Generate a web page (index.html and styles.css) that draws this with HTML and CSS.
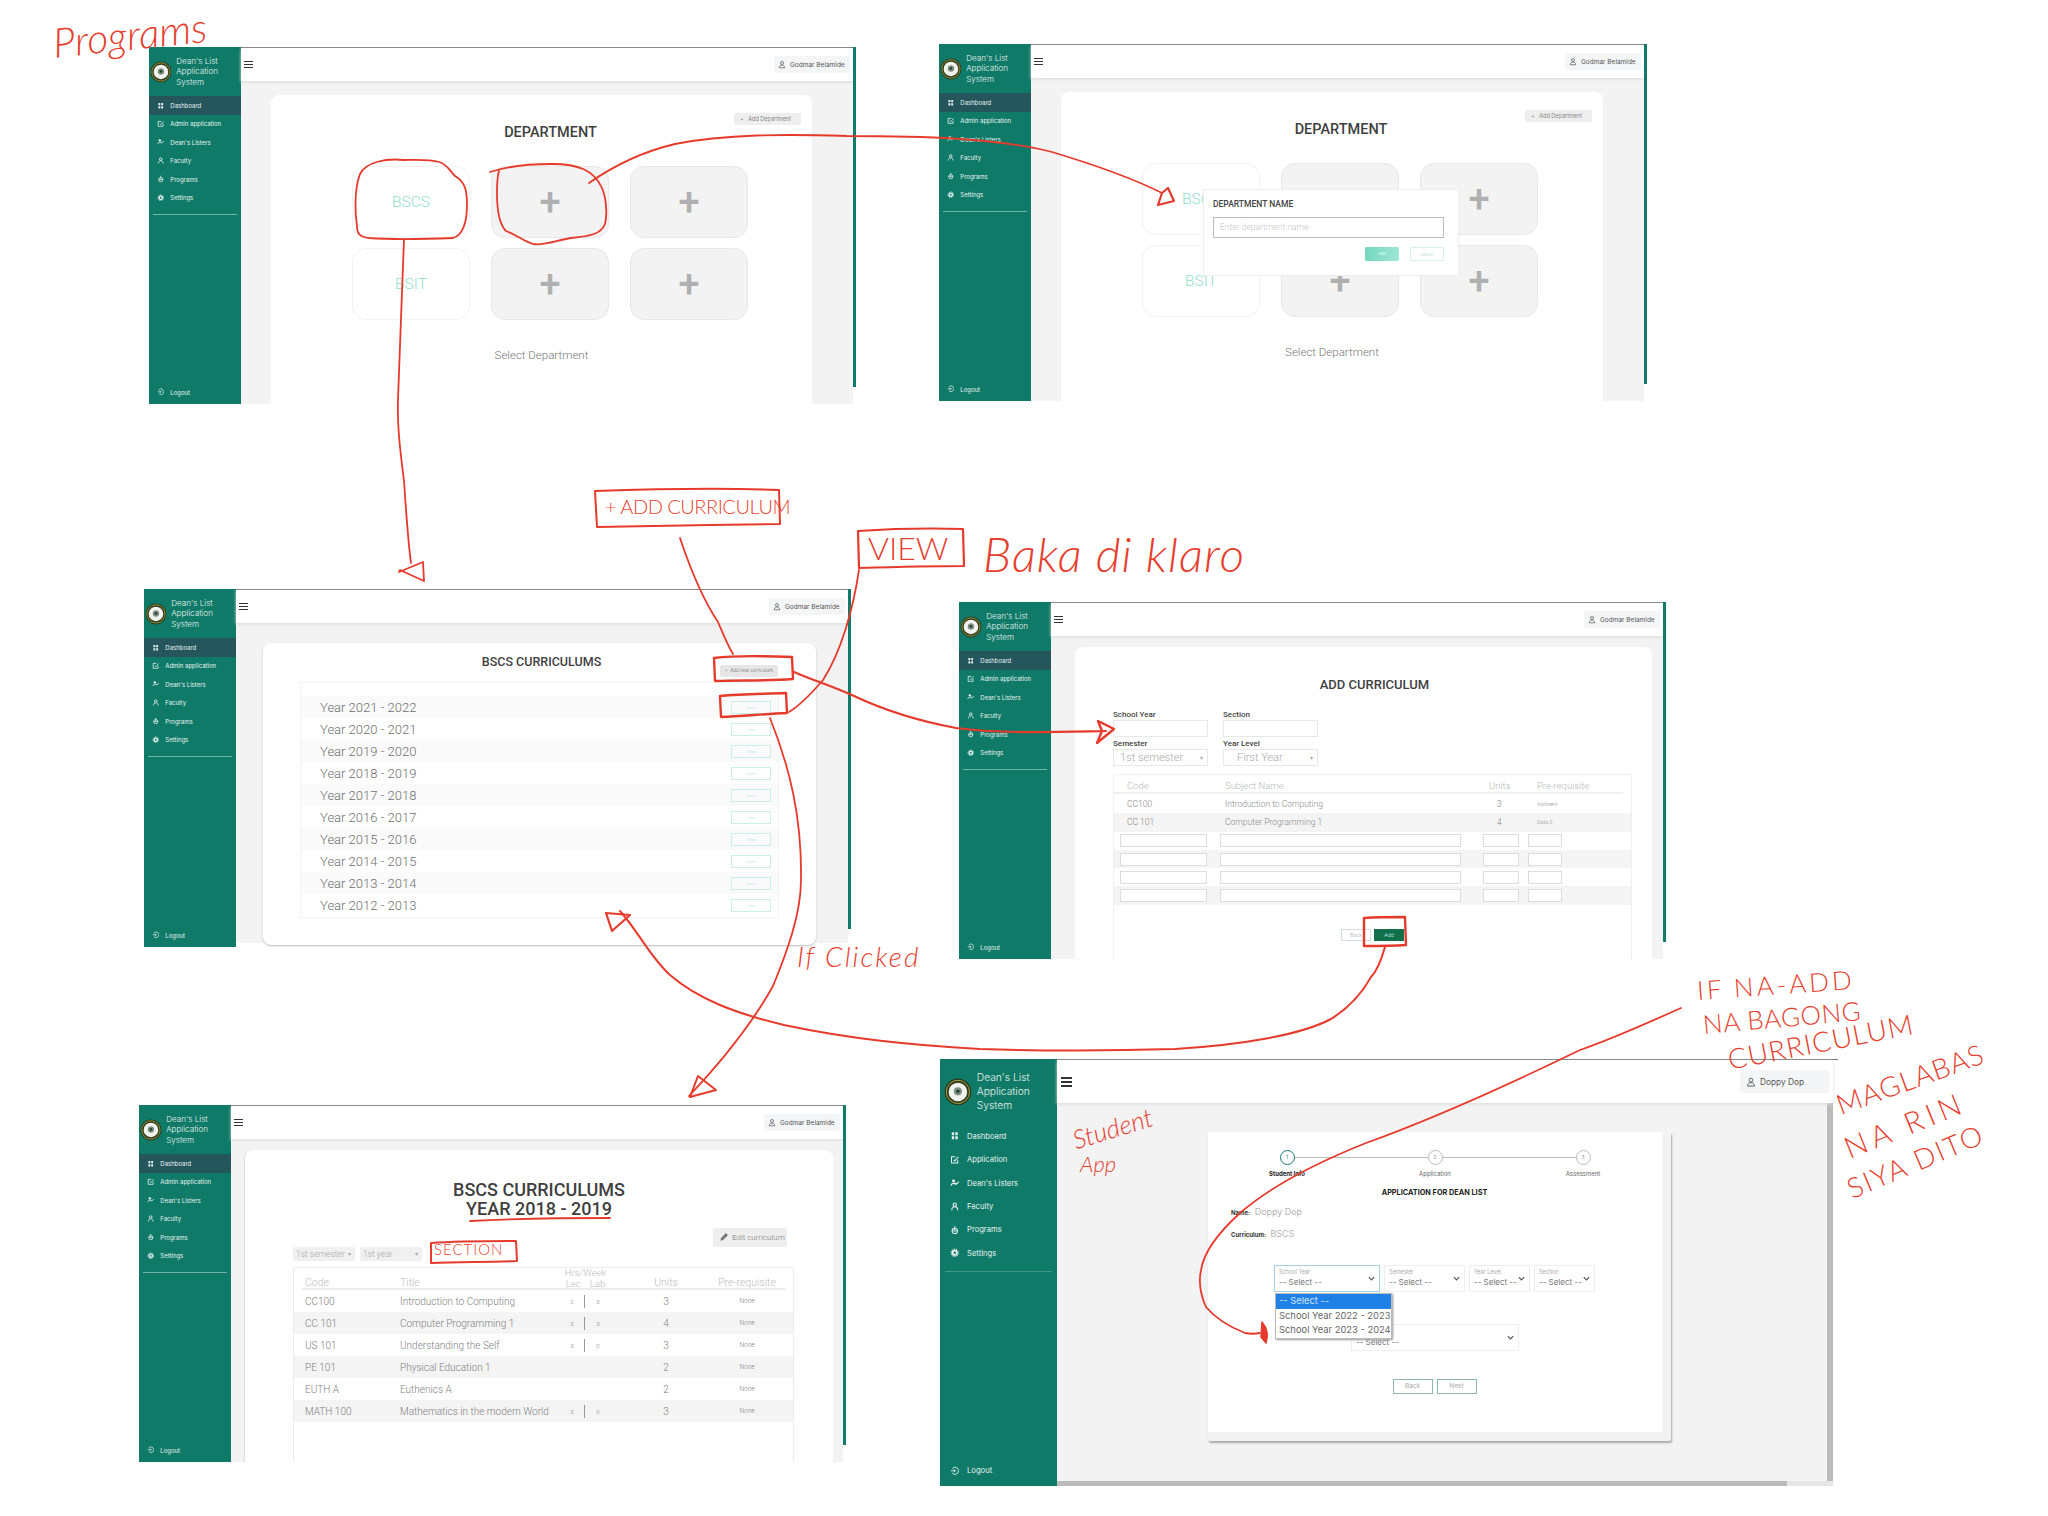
FILE: index.html
```html
<!DOCTYPE html>
<html>
<head>
<meta charset="utf-8">
<title>Dean's List Application System - flow notes</title>
<link rel="stylesheet" href="styles.css">
</head>
<body>

<!-- shared icons -->
<svg class="defs" width="0" height="0">
	<symbol id="i-dash" viewBox="0 0 16 16"><path d="M3 2h4v5H3zM9 2h4v5H9zM3 9h4v5H3zM9 9h4v5H9z" fill="currentColor"/></symbol>
	<symbol id="i-app" viewBox="0 0 16 16"><path d="M13 8v5.500H2.500V3H9M6 8l2 2 6-7" fill="none" stroke="currentColor" stroke-width="1.700"/></symbol>
	<symbol id="i-list" viewBox="0 0 16 16"><circle cx="6" cy="5" r="2.500" fill="currentColor"/><path d="M2 13c0-3 2-4 4-4s3 1 4 2M9 8l2 2 4-4" fill="none" stroke="currentColor" stroke-width="1.800"/></symbol>
	<symbol id="i-fac" viewBox="0 0 16 16"><circle cx="8" cy="4.500" r="2.800" fill="none" stroke="currentColor" stroke-width="1.800"/><path d="M3 14c0-4 2-6 5-6s5 2 5 6" fill="none" stroke="currentColor" stroke-width="1.800"/></symbol>
	<symbol id="i-prog" viewBox="0 0 16 16"><circle cx="8" cy="10" r="4.500" fill="none" stroke="currentColor" stroke-width="1.700"/><path d="M8 1.500V10M3.500 10h9" fill="none" stroke="currentColor" stroke-width="1.500"/></symbol>
	<symbol id="i-set" viewBox="0 0 16 16"><circle cx="8" cy="8" r="3.500" fill="none" stroke="currentColor" stroke-width="3"/><circle cx="8" cy="8" r="6" fill="none" stroke="currentColor" stroke-width="2" stroke-dasharray="2 1.700"/></symbol>
	<symbol id="i-out" viewBox="0 0 16 16"><path d="M4 4a6 6 0 1 1 0 8M1.500 8H9M6.500 5.500 9 8l-2.500 2.500" fill="none" stroke="currentColor" stroke-width="1.500"/></symbol>
	<symbol id="i-user" viewBox="0 0 16 16"><circle cx="8" cy="5" r="3" fill="none" stroke="currentColor" stroke-width="1.400"/><path d="M2.500 14.500c.5-4 2.500-5.500 5.500-5.500s5 1.500 5.500 5.500z" fill="none" stroke="currentColor" stroke-width="1.400"/></symbol>
	<symbol id="i-logo" viewBox="0 0 24 24"><circle cx="12" cy="12" r="11.500" fill="#2c3b1c"/><circle cx="12" cy="12" r="10" fill="none" stroke="#b9a94a" stroke-width=".8"/><circle cx="12" cy="12" r="8" fill="#f2f3ee"/><circle cx="12" cy="11.500" r="3.500" fill="#7f8f86"/><circle cx="12" cy="11.500" r="1.500" fill="#26452f"/></symbol>
	<symbol id="i-chev" viewBox="0 0 10 10"><path d="M2 3.500 5 6.500 8 3.500" fill="none" stroke="#555" stroke-width="1.300"/></symbol>
</svg>

<!-- departments -->
<section class="win" id="win1">
	<aside class="side">
		<div class="brand"><svg class="logo"><use href="#i-logo"/></svg><p>Dean's List<br>Application<br>System</p></div>
		<a class="item active"><svg><use href="#i-dash"/></svg>Dashboard</a>
		<a class="item"><svg><use href="#i-app"/></svg>Admin application</a>
		<a class="item"><svg><use href="#i-list"/></svg>Dean's Listers</a>
		<a class="item"><svg><use href="#i-fac"/></svg>Faculty</a>
		<a class="item"><svg><use href="#i-prog"/></svg>Programs</a>
		<a class="item"><svg><use href="#i-set"/></svg>Settings</a>
		<hr>
		<a class="item logout"><svg><use href="#i-out"/></svg>Logout</a>
	</aside>
	<div class="main">
		<header class="top"><span class="burger"><i></i><i></i><i></i></span><div class="user"><svg><use href="#i-user"/></svg>Godmar Belamide</div></header>
		<div class="body">
			<div class="card dept">
				<div class="tool-row"><a class="tool">+&nbsp;&nbsp;&nbsp;Add Department</a></div>
				<h1>DEPARTMENT</h1>
				<div class="tiles">
					<div class="tile on">BSCS</div>
					<div class="tile">+</div>
					<div class="tile">+</div>
					<div class="tile on">BSIT</div>
					<div class="tile">+</div>
					<div class="tile">+</div>
				</div>
				<p class="hint">Select Department</p>
			</div>
		</div>
	</div>
</section>

<section class="win" id="win2">
	<aside class="side">
		<div class="brand"><svg class="logo"><use href="#i-logo"/></svg><p>Dean's List<br>Application<br>System</p></div>
		<a class="item active"><svg><use href="#i-dash"/></svg>Dashboard</a>
		<a class="item"><svg><use href="#i-app"/></svg>Admin application</a>
		<a class="item"><svg><use href="#i-list"/></svg>Dean's Listers</a>
		<a class="item"><svg><use href="#i-fac"/></svg>Faculty</a>
		<a class="item"><svg><use href="#i-prog"/></svg>Programs</a>
		<a class="item"><svg><use href="#i-set"/></svg>Settings</a>
		<hr>
		<a class="item logout"><svg><use href="#i-out"/></svg>Logout</a>
	</aside>
	<div class="main">
		<header class="top"><span class="burger"><i></i><i></i><i></i></span><div class="user"><svg><use href="#i-user"/></svg>Godmar Belamide</div></header>
		<div class="body">
			<div class="card dept">
				<div class="tool-row"><a class="tool">+&nbsp;&nbsp;&nbsp;Add Department</a></div>
				<h1>DEPARTMENT</h1>
				<div class="tiles">
					<div class="tile on">BSCS</div>
					<div class="tile">+</div>
					<div class="tile">+</div>
					<div class="tile on">BSIT</div>
					<div class="tile">+</div>
					<div class="tile">+</div>
				</div>
				<p class="hint">Select Department</p>
			</div>
		</div>
	</div>
	<div class="modal">
		<h2>DEPARTMENT NAME</h2>
		<div class="modal-input">Enter department name</div>
		<div class="modal-btns"><a class="btn-add">Add</a><a class="btn-cancel">Cancel</a></div>
	</div>
</section>

<!-- curriculum list -->
<section class="win" id="win3">
	<aside class="side">
		<div class="brand"><svg class="logo"><use href="#i-logo"/></svg><p>Dean's List<br>Application<br>System</p></div>
		<a class="item active"><svg><use href="#i-dash"/></svg>Dashboard</a>
		<a class="item"><svg><use href="#i-app"/></svg>Admin application</a>
		<a class="item"><svg><use href="#i-list"/></svg>Dean's Listers</a>
		<a class="item"><svg><use href="#i-fac"/></svg>Faculty</a>
		<a class="item"><svg><use href="#i-prog"/></svg>Programs</a>
		<a class="item"><svg><use href="#i-set"/></svg>Settings</a>
		<hr>
		<a class="item logout"><svg><use href="#i-out"/></svg>Logout</a>
	</aside>
	<div class="main">
		<header class="top"><span class="burger"><i></i><i></i><i></i></span><div class="user"><svg><use href="#i-user"/></svg>Godmar Belamide</div></header>
		<div class="body">
			<div class="card years-card">
				<div class="years-head">
					<span></span>
					<h1>BSCS CURRICULUMS</h1>
					<span class="years-tool"><a class="tool small">+&nbsp;&nbsp;Add new curriculum</a></span>
				</div>
				<div class="years">
					<div class="year"><span>Year 2021 - 2022</span><a>View</a></div>
					<div class="year"><span>Year 2020 - 2021</span><a>View</a></div>
					<div class="year"><span>Year 2019 - 2020</span><a>View</a></div>
					<div class="year"><span>Year 2018 - 2019</span><a>View</a></div>
					<div class="year"><span>Year 2017 - 2018</span><a>View</a></div>
					<div class="year"><span>Year 2016 - 2017</span><a>View</a></div>
					<div class="year"><span>Year 2015 - 2016</span><a>View</a></div>
					<div class="year"><span>Year 2014 - 2015</span><a>View</a></div>
					<div class="year"><span>Year 2013 - 2014</span><a>View</a></div>
					<div class="year"><span>Year 2012 - 2013</span><a>View</a></div>
				</div>
			</div>
		</div>
	</div>
</section>

<!-- add curriculum -->
<section class="win" id="win4">
	<aside class="side">
		<div class="brand"><svg class="logo"><use href="#i-logo"/></svg><p>Dean's List<br>Application<br>System</p></div>
		<a class="item active"><svg><use href="#i-dash"/></svg>Dashboard</a>
		<a class="item"><svg><use href="#i-app"/></svg>Admin application</a>
		<a class="item"><svg><use href="#i-list"/></svg>Dean's Listers</a>
		<a class="item"><svg><use href="#i-fac"/></svg>Faculty</a>
		<a class="item"><svg><use href="#i-prog"/></svg>Programs</a>
		<a class="item"><svg><use href="#i-set"/></svg>Settings</a>
		<hr>
		<a class="item logout"><svg><use href="#i-out"/></svg>Logout</a>
	</aside>
	<div class="main">
		<header class="top"><span class="burger"><i></i><i></i><i></i></span><div class="user"><svg><use href="#i-user"/></svg>Godmar Belamide</div></header>
		<div class="body">
			<div class="card add-card">
				<h1>ADD CURRICULUM</h1>
				<div class="add-form">
					<label>School Year<b class="field"></b></label>
					<label>Section<b class="field"></b></label>
					<label>Semester<b class="field pick">1st semester<em>▾</em></b></label>
					<label>Year Level<b class="field pick indent">First Year<em>▾</em></b></label>
				</div>
				<div class="add-table">
					<div class="add-row add-head"><span>Code</span><span>Subject Name</span><span>Units</span><span>Pre-requisite</span></div>
					<div class="add-row done"><span>CC100</span><span>Introduction to Computing</span><span>3</span><span>Valonert</span></div>
					<div class="add-row done alt"><span>CC 101</span><span>Computer Programming 1</span><span>4</span><span>Data 2</span></div>
					<div class="add-row inputs"><i></i><i></i><i></i><i></i></div>
					<div class="add-row inputs alt"><i></i><i></i><i></i><i></i></div>
					<div class="add-row inputs"><i></i><i></i><i></i><i></i></div>
					<div class="add-row inputs alt"><i></i><i></i><i></i><i></i></div>
					<div class="add-btns"><a class="btn-back">Back</a><a class="btn-green">Add</a></div>
				</div>
			</div>
		</div>
	</div>
</section>

<!-- one curriculum -->
<section class="win" id="win5">
	<aside class="side">
		<div class="brand"><svg class="logo"><use href="#i-logo"/></svg><p>Dean's List<br>Application<br>System</p></div>
		<a class="item active"><svg><use href="#i-dash"/></svg>Dashboard</a>
		<a class="item"><svg><use href="#i-app"/></svg>Admin application</a>
		<a class="item"><svg><use href="#i-list"/></svg>Dean's Listers</a>
		<a class="item"><svg><use href="#i-fac"/></svg>Faculty</a>
		<a class="item"><svg><use href="#i-prog"/></svg>Programs</a>
		<a class="item"><svg><use href="#i-set"/></svg>Settings</a>
		<hr>
		<a class="item logout"><svg><use href="#i-out"/></svg>Logout</a>
	</aside>
	<div class="main">
		<header class="top"><span class="burger"><i></i><i></i><i></i></span><div class="user"><svg><use href="#i-user"/></svg>Godmar Belamide</div></header>
		<div class="body">
			<div class="card view-card">
				<h1>BSCS CURRICULUMS<br>YEAR 2018 - 2019</h1>
				<div class="edit-row"><a class="tool edit"><svg viewBox="0 0 16 16"><path d="M2 14l1-4 7-7 3 3-7 7z" fill="#777"/></svg>Edit curriculum</a></div>
				<div class="filters"><span>1st semester<em>▾</em></span><span>1st year<em>▾</em></span></div>
				<div class="subjects">
					<div class="sub-row sub-head"><span class="c">Code</span><span class="t">Title</span><span class="hrs">Hrs/Week<br>Lec&nbsp;&nbsp;&nbsp;&nbsp;Lab</span><span class="u">Units</span><span class="p">Pre-requisite</span></div>
					<div class="sub-row"><span class="c">CC100</span><span class="t">Introduction to Computing</span><span class="l">2</span><span class="b">3</span><span class="u">3</span><span class="p">None</span></div>
					<div class="sub-row alt"><span class="c">CC 101</span><span class="t">Computer Programming 1</span><span class="l">3</span><span class="b">3</span><span class="u">4</span><span class="p">None</span></div>
					<div class="sub-row"><span class="c">US 101</span><span class="t">Understanding the Self</span><span class="l">3</span><span class="b">0</span><span class="u">3</span><span class="p">None</span></div>
					<div class="sub-row alt"><span class="c">PE 101</span><span class="t">Physical Education 1</span><span class="u">2</span><span class="p">None</span></div>
					<div class="sub-row"><span class="c">EUTH A</span><span class="t">Euthenics A</span><span class="u">2</span><span class="p">None</span></div>
					<div class="sub-row alt"><span class="c">MATH 100</span><span class="t">Mathematics in the modern World</span><span class="l">3</span><span class="b">0</span><span class="u">3</span><span class="p">None</span></div>
				</div>
			</div>
		</div>
	</div>
</section>

<!-- student side -->
<section class="win big" id="win6">
	<aside class="side">
		<div class="brand"><svg class="logo"><use href="#i-logo"/></svg><p>Dean's List<br>Application<br>System</p></div>
		<a class="item"><svg><use href="#i-dash"/></svg>Dashboard</a>
		<a class="item"><svg><use href="#i-app"/></svg>Application</a>
		<a class="item"><svg><use href="#i-list"/></svg>Dean's Listers</a>
		<a class="item"><svg><use href="#i-fac"/></svg>Faculty</a>
		<a class="item"><svg><use href="#i-prog"/></svg>Programs</a>
		<a class="item"><svg><use href="#i-set"/></svg>Settings</a>
		<hr>
		<a class="item logout"><svg><use href="#i-out"/></svg>Logout</a>
	</aside>
	<div class="main">
		<header class="top"><span class="burger"><i></i><i></i><i></i></span><div class="user"><svg><use href="#i-user"/></svg>Doppy Dop</div></header>
		<div class="body">
			<div class="card apply">
				<div class="steps">
					<div class="step now"><b>1</b><span>Student Info</span></div>
					<div class="step"><b>2</b><span>Application</span></div>
					<div class="step"><b>3</b><span>Assessment</span></div>
				</div>
				<h3>APPLICATION FOR DEAN LIST</h3>
				<p class="who"><strong>Name:</strong> Doppy Dop</p>
				<p class="who"><strong>Curriculum:</strong> BSCS</p>
				<div class="selects">
					<div class="sel focus"><small>School Year</small>-- Select --<svg><use href="#i-chev"/></svg></div>
					<div class="sel sem"><small>Semester</small>-- Select --<svg><use href="#i-chev"/></svg></div>
					<div class="sel lvl"><small>Year Level</small>-- Select --<svg><use href="#i-chev"/></svg></div>
					<div class="sel lvl"><small>Section</small>-- Select --<svg><use href="#i-chev"/></svg></div>
				</div>
				<div class="sel wide">-- Select --<svg><use href="#i-chev"/></svg></div>
				<div class="step-btns"><a>Back</a><a>Next</a></div>
				<ul class="drop">
					<li class="sel-opt">-- Select --</li>
					<li>School Year 2022 - 2023</li>
					<li>School Year 2023 - 2024</li>
				</ul>
			</div>
		</div>
		<div class="bar-x"></div>
	</div>
</section>

<!-- red pen marks -->
<svg class="pen" width="2048" height="1516" viewBox="0 0 2048 1516">
	<g fill="none" stroke="#e53a2c" stroke-width="1.800" stroke-linecap="round" stroke-linejoin="round">
		<path d="M404 160c-18-2-38 2-44 14-6 16-5 40-3 52 0 8 3 11 12 12 26 2 60 1 84 0 10-3 14-16 14-34 0-14-2-22-12-28-6-6-8-12-16-14-10-3-24-2-35-2"/>
		<path d="M490 172c18-6 40-8 62-8 26 0 42 6 50 24 5 12 5 28 3 36-4 10-14 12-34 14-14 2-26 8-38 6-10-3-18-10-27-13-8-8-9-24-9-38 0-8 0-16 2-22"/>
		<path d="M589 183c20-14 48-30 86-39 50-10 110-10 172-8 74 0 150 2 205 16 40 12 80 26 110 41"/>
		<path d="M1162 193l-4 12 16-4-6-13z" stroke-width="2.200"/>
		<path d="M404 239c-2 60-4 110-6 160-1 26 2 50 6 82 2 30 4 60 7 82"/>
		<path d="M399 572l24-10 1 19-24-11z"/>
		<path d="M595 491c60-2 130-3 184-1l1 34c-60 1-130 2-183 3z" stroke-width="2"/>
		<path d="M680 538c12 36 26 66 38 84 6 14 10 24 15 32"/>
		<path d="M714 658c24-3 52-2 78-1l1 22c-26 2-52 1-78 2z" stroke-width="2.400"/>
		<path d="M720 696c22-2 44-2 66-3l1 20c-22 1-44 3-66 4z" stroke-width="2.400"/>
		<path d="M858 531c30-2 72-3 105-2l1 37c-34 0-72 1-105 2z" stroke-width="2.200"/>
		<path d="M859 570c-6 40-18 82-36 110-12 14-24 26-34 32"/>
		<path d="M794 672c18 8 38 14 60 24 34 16 70 26 102 32 46 6 100 4 150 3" stroke-width="2.200"/>
		<path d="M1114 729l-16-8 4 10-5 12z" stroke-width="2.400"/>
		<path d="M770 718c20 50 32 100 31 162 0 34-14 72-28 106-20 36-50 74-84 110"/>
		<path d="M690 1097l26-7-18-14z" stroke-width="2"/>
		<path d="M1364 918c14-1 28-1 41-1l1 28c-14 1-28 1-42 1z" stroke-width="2.400"/>
		<path d="M1385 947c-4 14-8 24-14 30-10 18-24 32-40 42-30 16-90 26-156 30-70 2-130 2-195 0-70-4-130-10-196-24-50-12-86-26-114-50-20-18-32-44-50-64" stroke-width="2"/>
		<path d="M606 913l24 2-18 16z" stroke-width="2.200"/>
		<path d="M470 1221c40-2 90-3 140-3"/>
		<path d="M431 1243c28-2 56-2 85-2l1 20c-30 1-58 1-86 2z" stroke-width="2"/>
		<path d="M1681 1008c-40 18-72 32-101 42-70 34-150 70-214 93-50 20-96 44-126 70-22 20-36 38-39 57-3 14 0 26 5 37 10 12 24 20 39 26 5 1 10 1 15 0" stroke-width="1.800"/>
		<path d="M1262 1322c5 6 7 12 4 21l-5-6z" fill="#e53a2c" stroke-width="1.500"/>
	</g>
</svg>

<span class="note n-programs">Programs</span>
<span class="note n-add">+ ADD CURRICULUM</span>
<span class="note n-view">VIEW</span>
<span class="note n-baka">Baka di klaro</span>
<span class="note n-if">If Clicked</span>
<span class="note n-section">SECTION</span>
<span class="note n-student">Student</span>
<span class="note n-app">App</span>
<span class="note n-na1">IF NA-ADD</span>
<span class="note n-na2">NA BAGONG</span>
<span class="note n-na3">CURRICULUM</span>
<span class="note n-na4">MAGLABAS</span>
<span class="note n-na5">NA RIN</span>
<span class="note n-na6">SIYA DITO</span>

</body>
</html>
```

FILE: styles.css
```css
* {
	margin: 0;
	padding: 0;
	box-sizing: border-box;
}
body {
	position: relative;
	width: 2048px;
	height: 1516px;
	overflow: hidden;
	background: #fff;
	font-family: Inter, "Noto Sans", sans-serif;
}
.defs {
	position: absolute;
}

/* windows on the sheet */
.win {
	position: absolute;
	display: flex;
	overflow: hidden;
}
#win1 { left: 149px; top: 47px; width: 707px; height: 357px; }
#win2 { left: 939px; top: 44px; width: 708px; height: 357px; }
#win3 { left: 144px; top: 589px; width: 707px; height: 358px; }
#win4 { left: 959px; top: 602px; width: 707px; height: 357px; }
#win5 { left: 139px; top: 1105px; width: 707px; height: 357px; }
#win6 { left: 940px; top: 1059px; width: 898px; height: 427px; }

/* teal strip down the right edge */
.win::after {
	content: "";
	position: absolute;
	top: 0;
	right: 0;
	width: 3px;
	height: 340px;
	background: #117a68;
}
.big::after {
	display: none;
}

/* sidebar */
.side {
	flex: 0 0 92px;
	display: flex;
	flex-direction: column;
	font-size: 6px;
	background: #107a68;
	color: #e6f2ef;
	padding-bottom: 0.450em;
}
.brand {
	height: 8.200em;
	display: flex;
	align-items: center;
	padding-left: 0.200em;
}
.logo {
	width: 3.650em;
	height: 3.650em;
	flex: none;
}
.brand p {
	font-size: 1.350em;
	line-height: 1.320;
	margin-left: 0.500em;
	font-weight: 300;
}
.item {
	height: 3.070em;
	display: flex;
	align-items: center;
	white-space: nowrap;
	padding-left: 1.250em;
}
.item svg {
	width: 1.250em;
	height: 1.250em;
	margin-right: 1.050em;
	flex: none;
}
.active {
	background: #25565c;
}
.side hr {
	border: 0;
	border-top: 1px solid #6fb3a6;
	margin: 1.200em 0.700em 0 0.700em;
}
.logout {
	margin-top: auto;
}

/* main part */
.main {
	flex: 1;
	display: flex;
	flex-direction: column;
	border-top: 1px solid #777;
	padding-right: 3px;
	min-width: 0;
}
.top {
	flex: 0 0 33px;
	display: flex;
	align-items: center;
	justify-content: space-between;
	background: #fff;
	box-shadow: 0 1px 3px #d8d8d8;
	padding: 0 3px 0 3px;
	position: relative;
}
.burger {
	width: 9px;
	display: flex;
	flex-direction: column;
	gap: 1.500px;
}
.burger i {
	display: block;
	height: 1.500px;
	background: #333;
}
.user {
	width: 76px;
	height: 17px;
	background: #f4f5f7;
	border-radius: 2px;
	display: flex;
	align-items: center;
	padding-left: 4px;
	font-size: 6.500px;
	color: #555;
	white-space: nowrap;
}
.user svg {
	width: 8px;
	height: 9px;
	margin-right: 4px;
	flex: none;
}
.body {
	flex: 1;
	display: flex;
	background: #f3f3f3;
	min-height: 0;
}
.card {
	flex: 1;
	background: #fff;
	border-radius: 8px 8px 0 0;
	min-width: 0;
}
h1 {
	font-family: Roboto, sans-serif;
	font-weight: 500;
	color: #3f3f3f;
	text-align: center;
}
.tool {
	display: inline-block;
	background: #eee;
	border-radius: 2px;
	color: #888;
	font-size: 5.500px;
	line-height: 12px;
	height: 12px;
	padding: 0 6px;
	white-space: nowrap;
}

/* department tiles */
.body:has(.dept) {
	padding: 14px 41px 0 30px;
}
.dept {
	padding-top: 18px;
}
.tool-row {
	display: flex;
	justify-content: flex-end;
	padding-right: 11px;
}
.dept .tool {
	width: 67px;
}
.dept h1 {
	font-size: 14.500px;
	line-height: 18px;
	margin-top: -1px;
	padding-left: 18px;
}
.tiles {
	display: grid;
	grid-template-columns: repeat(3, 118px);
	gap: 10px 21px;
	margin: 24px 0 0 81px;
}
.tile {
	height: 72px;
	border-radius: 14px;
	border: 1px solid #e8e8e8;
	background: #f3f3f3;
	display: flex;
	align-items: center;
	justify-content: center;
	font-family: Roboto, sans-serif;
	font-size: 38px;
	font-weight: 500;
	color: #b0b0b0;
}
.tile.on {
	background: #fff;
	border-color: #f2f2f2;
	font-size: 15.500px;
	font-weight: 300;
	color: #92ddd0;
}
.hint {
	font-family: Roboto, sans-serif;
	font-weight: 300;
	font-size: 11.500px;
	color: #777;
	text-align: center;
	margin-top: 28px;
}

/* popup over the tiles */
.modal {
	position: absolute;
	left: 264px;
	top: 145px;
	width: 256px;
	height: 87px;
	background: #fff;
	border: 1px solid #eee;
	padding: 9px 14px 0 9px;
	z-index: 2;
}
.modal h2 {
	font-family: Roboto, sans-serif;
	font-size: 8.500px;
	font-weight: 500;
	color: #444;
}
.modal-input {
	margin-top: 8px;
	height: 21px;
	border: 1px solid #bbb;
	font-family: Roboto, sans-serif;
	font-weight: 300;
	font-size: 8.500px;
	line-height: 19px;
	color: #c4c4c4;
	padding-left: 6px;
}
.modal-btns {
	display: flex;
	justify-content: flex-end;
	gap: 11px;
	margin-top: 9px;
}
.modal-btns a {
	width: 34px;
	height: 14px;
	font-size: 4px;
	line-height: 14px;
	text-align: center;
	border-radius: 1px;
}
.btn-add {
	background: linear-gradient(90deg, #74d8bc, #9ee6d6);
	color: #e8fff8;
}
.btn-cancel {
	border: 1px solid #d6efe9;
	color: #bde5dc;
}

/* curriculum list */
.body:has(.years-card) {
	padding: 20px 32px 2px 27px;
	background: linear-gradient(#f3f3f3 320px, #fff 320px);
}
.years-card {
	border-radius: 8px;
	padding: 0 37px;
	box-shadow: 0 1px 2px #bbb;
}
.years-head {
	display: grid;
	grid-template-columns: 1fr auto 1fr;
	height: 39px;
	padding-top: 11px;
}
.years-head h1 {
	font-size: 12.500px;
	line-height: 16px;
	margin-left: 4px;
}
.years-tool {
	display: flex;
	justify-content: flex-end;
	align-items: flex-start;
	padding-top: 11px;
	padding-right: 1px;
}
.tool.small {
	font-size: 4.500px;
	padding: 0 5px;
	background: #e6e6e8;
}
.years {
	height: 236px;
	border: 1px solid #f3f3f3;
	padding-top: 13px;
}
.year {
	height: 22px;
	display: flex;
	align-items: center;
	justify-content: space-between;
	padding: 0 7px 0 19px;
	font-family: Roboto, sans-serif;
	font-weight: 300;
	font-size: 13px;
	color: #6f6f6f;
}
.year:nth-child(odd) {
	background: #fafafa;
}
.year a {
	width: 40px;
	height: 13px;
	border: 1px solid #c9efe7;
	font-size: 4px;
	line-height: 11px;
	text-align: center;
	color: #a7e3d8;
}

/* add curriculum */
.body:has(.add-card) {
	padding: 11px 11px 0 24px;
}
.add-card {
	padding: 30px 20px 0 10px;
}
.add-card h1 {
	font-size: 13px;
	line-height: 16px;
	padding-left: 32px;
}
.add-form {
	display: grid;
	grid-template-columns: 95px 95px;
	column-gap: 15px;
	row-gap: 2px;
	margin: 17px 0 0 28px;
}
.add-form label {
	font-family: Roboto, sans-serif;
	font-size: 8px;
	line-height: 9px;
	font-weight: 500;
	color: #444;
	display: block;
}
.field {
	display: block;
	height: 17px;
	margin-top: 1px;
	border: 1px solid #e8e8e8;
	font-weight: 300;
	position: relative;
}
.pick {
	font-size: 11px;
	line-height: 15px;
	color: #aaa;
	padding-left: 6px;
}
.pick.indent {
	padding-left: 13px;
}
.pick em {
	position: absolute;
	right: 4px;
	top: 0;
	font-size: 6px;
	font-style: normal;
}
.add-table {
	margin: 8px 0 0 28px;
	border: 1px solid #f0f0f0;
	border-bottom: 0;
	border-radius: 3px 3px 0 0;
	height: 190px;
	padding-top: 3px;
	font-family: Roboto, sans-serif;
	font-weight: 300;
}
.add-row {
	display: grid;
	grid-template-columns: 100px 263px 45px 34px;
	padding-left: 6px;
	align-items: center;
	height: 18.300px;
}
.add-head {
	height: 16px;
	font-size: 9.500px;
	color: #b8b8b8;
	padding-left: 13px;
	grid-template-columns: 98px 264px 48px 90px;
	margin: 0 8px 1px 0;
	border-bottom: 2px solid #f0f0f0;
}
.done {
	font-size: 8.500px;
	color: #888;
	padding-left: 13px;
	grid-template-columns: 98px 264px 48px 90px;
}
.done span:nth-child(3) {
	padding-left: 8px;
}
.done span:last-child {
	font-size: 5.500px;
}
.add-row.alt {
	background: #f4f4f4;
}
.add-row i {
	display: block;
	height: 13px;
	background: #fff;
	border: 1px solid #ddd;
}
.add-row i:nth-child(1) { width: 87px; }
.add-row i:nth-child(2) { width: 241px; }
.add-row i:nth-child(3) { width: 36px; }
.add-row i:nth-child(4) { width: 34px; }
.add-btns {
	display: flex;
	justify-content: center;
	gap: 3px;
	margin-top: 24px;
}
.add-btns a {
	width: 30px;
	height: 12px;
	font-size: 5.500px;
	line-height: 12px;
	text-align: center;
}
.add-btns .btn-back {
	border: 1px solid #d5dedb;
	color: #9ab;
	line-height: 10px;
}
.btn-green {
	background: #11704a;
	color: #dff;
}

/* single curriculum */
.body:has(.view-card) {
	padding: 11px 10px 0 14px;
}
.view-card {
	padding-top: 30px;
	box-shadow: -1px 0 1px #ddd;
}
.view-card h1 {
	font-size: 18px;
	line-height: 19px;
}
.edit-row {
	display: flex;
	justify-content: flex-end;
	padding-right: 46px;
	margin-top: 10px;
}
.tool.edit {
	height: 19px;
	line-height: 19px;
	width: 74px;
	padding: 0 0 0 6px;
	font-family: Roboto, sans-serif;
	font-size: 8px;
	font-weight: 300;
	background: #eee;
	color: #777;
}
.edit svg {
	width: 11px;
	height: 11px;
	margin-right: 2px;
	vertical-align: -2px;
}
.filters {
	display: flex;
	gap: 5px;
	margin: 0 0 0 48px;
}
.filters span {
	width: 62px;
	height: 14px;
	background: #f0f0f0;
	border-radius: 2px;
	font-family: Roboto, sans-serif;
	font-weight: 300;
	font-size: 8.500px;
	line-height: 14px;
	color: #aaa;
	padding-left: 3px;
	position: relative;
}
.filters em {
	position: absolute;
	right: 4px;
	font-size: 6px;
	font-style: normal;
}
.subjects {
	margin: 6px 39px 0 48px;
	height: 200px;
	border: 1px solid #ececec;
	border-bottom: 0;
	border-radius: 3px 3px 0 0;
	font-family: Roboto, sans-serif;
	font-weight: 300;
}
.sub-row {
	display: grid;
	grid-template-columns: 95px 160px 25px 26px 35px 40px 21px 80px;
	padding-left: 11px;
	height: 22px;
	align-items: center;
	font-size: 10px;
	color: #808080;
}
.sub-row.alt {
	background: #f4f4f4;
}
.sub-head {
	height: 22px;
	align-items: end;
	font-size: 10.500px;
	color: #bdbdbd;
	margin: 0 8px 0 8px;
	padding-left: 3px;
	border-bottom: 2px solid #ececec;
}
.sub-row .c { grid-column: 1; }
.sub-row .t { grid-column: 2; white-space: nowrap; }
.sub-row .l { grid-column: 3; text-align: center; font-size: 6px; border-right: 1px solid #999; line-height: 13px; }
.sub-row .b { grid-column: 4; text-align: center; font-size: 6px; }
.sub-row .u { grid-column: 6; text-align: center; }
.sub-row .p { grid-column: 8; text-align: center; font-size: 6.500px; }
.sub-head .hrs { grid-column: 3 / span 2; line-height: 10.500px; font-size: 9.500px; text-align: center; white-space: nowrap; }
.sub-head .p { font-size: 10.500px; white-space: nowrap; }

/* student application */
.big .side {
	flex-basis: 117px;
	font-size: 7.620px;
}
.big .brand {
	height: 8.600em;
	padding-left: 0.500em;
}
.big .side hr {
	border-top-color: #3f9583;
	margin-top: 0.800em;
}
.big .main {
	border-top: 1px solid #777;
	padding-right: 5px;
	position: relative;
	background: linear-gradient(90deg, transparent 770px, #fff 770px);
}
.big .top {
	flex-basis: 43px;
	padding-left: 4px;
}
.big .burger {
	width: 11px;
	gap: 2px;
}
.big .burger i {
	height: 2px;
}
.big .user {
	width: 89px;
	height: 23px;
	margin-right: 1px;
	padding-left: 6px;
	font-size: 8.300px;
}
.big .user svg {
	width: 10px;
	height: 10px;
	margin-right: 4px;
}
.big .body {
	padding: 29px 156px 40px 151px;
	border-right: 6px solid #bbb;
}
.bar-x {
	flex: 0 0 5px;
	background: linear-gradient(90deg, #bbb 730px, #e6e6e6 730px);
}
.apply {
	position: relative;
	border-radius: 2px;
	border-right: 9px solid #f2f2f2;
	border-bottom: 9px solid #f2f2f2;
	box-shadow: 1px 2px 2px #aaa;
	padding-top: 18px;
	font-size: 7px;
	color: #555;
}
.steps {
	display: grid;
	grid-template-columns: repeat(3, 148px);
	margin-left: 5px;
}
.step {
	position: relative;
	display: flex;
	flex-direction: column;
	align-items: center;
	font-size: 6px;
	color: #666;
}
.step b {
	width: 15px;
	height: 15px;
	border-radius: 50%;
	border: 1px solid #bbb;
	background: #fff;
	font-size: 5px;
	font-weight: 400;
	line-height: 13px;
	text-align: center;
	color: #999;
	z-index: 1;
}
.step:not(:last-child)::after {
	content: "";
	position: absolute;
	top: 7px;
	left: 50%;
	width: 100%;
	border-top: 1px solid #bbb;
}
.step span {
	margin-top: 5px;
}
.step.now b {
	border: 1.500px solid #157a74;
	color: #157a74;
	line-height: 12px;
}
.step.now span {
	font-weight: 700;
	color: #222;
}
.apply h3 {
	font-size: 7.300px;
	line-height: 10px;
	font-weight: 700;
	color: #222;
	text-align: center;
	margin: 11px 0 7.500px;
	padding-right: 1px;
}
.who {
	font-size: 9px;
	font-weight: 300;
	color: #999;
	line-height: 12px;
	margin: 0 0 9.400px 23px;
}
.who strong {
	font-size: 6px;
	font-weight: 700;
	color: #333;
	margin-right: 2px;
}
.selects {
	display: flex;
	gap: 4px;
	margin: 24.500px 0 0 66px;
}
.sel {
	position: relative;
	width: 106px;
	height: 27px;
	border: 1px solid #eee;
	font-size: 8px;
	color: #777;
	padding: 2px 0 0 4px;
	white-space: nowrap;
}
.sel small {
	display: block;
	font-size: 5.500px;
	line-height: 9px;
	color: #aaa;
}
.sel svg {
	position: absolute;
	right: 3px;
	top: 8px;
	width: 9px;
	height: 9px;
}
.sel.focus {
	border-color: #a8cfe8;
}
.sel.sem {
	width: 81px;
}
.sel.lvl {
	width: 61px;
}
.sel.wide {
	width: 168px;
	margin: 32px 0 0 143px;
	padding-top: 12px;
}
.step-btns {
	display: flex;
	justify-content: center;
	gap: 4px;
	margin-top: 28px;
	padding-right: 1px;
}
.step-btns a {
	width: 40px;
	height: 15px;
	border: 1px solid #8bb5b2;
	font-size: 6.500px;
	line-height: 13px;
	text-align: center;
	color: #aaa;
}
.drop {
	position: absolute;
	left: 67px;
	top: 161px;
	width: 117px;
	list-style: none;
	background: #fff;
	border: 1px solid #bbb;
	box-shadow: 1px 1px 2px #999;
	font-size: 9.400px;
	color: #666;
	z-index: 3;
}
.drop li {
	height: 14.600px;
	line-height: 14.600px;
	padding-left: 3px;
	white-space: nowrap;
}
.drop .sel-opt {
	background: #1f80e6;
	color: #cfe6ff;
}

/* pen marks on top of it all */
.pen {
	position: absolute;
	left: 0;
	top: 0;
	z-index: 5;
	pointer-events: none;
}
.note {
	position: absolute;
	z-index: 6;
	font-family: Lato, sans-serif;
	font-weight: 300;
	color: #e63f30;
	white-space: nowrap;
	transform-origin: left center;
}
.n-programs { left: 53px; top: 24px; font-size: 41px; line-height: 38px; font-style: italic; transform: rotate(-6deg); }
.n-add { left: 605px; top: 494px; font-size: 20px; letter-spacing: -0.500px; }
.n-view { left: 868px; top: 528px; font-size: 32px; }
.n-baka { left: 983px; top: 525px; font-size: 48px; font-style: italic; letter-spacing: 1px; }
.n-if { left: 797px; top: 939px; font-size: 28px; font-style: italic; letter-spacing: 2px; }
.n-section { left: 434px; top: 1240px; font-size: 15px; letter-spacing: 1px; }
.n-student { left: 1073px; top: 1124px; font-size: 26px; font-style: italic; transform: rotate(-17deg); }
.n-app { left: 1080px; top: 1150px; font-size: 22px; font-style: italic; }
.n-na1 { left: 1697px; top: 974px; font-size: 26px; letter-spacing: 3px; transform: rotate(-4deg); }
.n-na2 { left: 1703px; top: 1008px; font-size: 26px; letter-spacing: 0.500px; transform: rotate(-5deg); }
.n-na3 { left: 1728px; top: 1042px; font-size: 28px; letter-spacing: 1px; transform: rotate(-11deg); }
.n-na4 { left: 1837px; top: 1088px; font-size: 28px; letter-spacing: 1px; transform: rotate(-20deg); }
.n-na5 { left: 1845px; top: 1130px; font-size: 30px; letter-spacing: 5px; transform: rotate(-22deg); }
.n-na6 { left: 1848px; top: 1172px; font-size: 28px; letter-spacing: 2px; transform: rotate(-23deg); }
```
